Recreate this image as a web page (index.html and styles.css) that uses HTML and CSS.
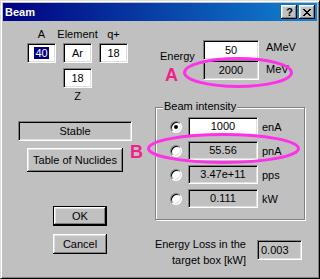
FILE: index.html
```html
<!DOCTYPE html>
<html lang="en">
<head>
  <meta charset="UTF-8">
  <title>Beam</title>
  <link rel="stylesheet" href="styles.css">
</head>
<body>
  <div class="window">
    <div class="titlebar">
      <span class="title-text">Beam</span>
      <div class="title-btn help">?</div>
      <div class="title-btn close">
        <svg width="8" height="7" viewBox="0 0 8 7" shape-rendering="crispEdges">
          <path d="M0 0h2v1H0z M6 0h2v1H6z M1 1h2v1H1z M5 1h2v1H5z M2 2h4v1H2z M3 3h2v1H3z M2 4h4v1H2z M1 5h2v1H1z M5 5h2v1H5z M0 6h2v1H0z M6 6h2v1H6z" fill="#000"/>
        </svg>
      </div>
    </div>

    <div class="client">
      <div class="left">
        <div class="nuclide">
          <div class="cap">A</div>
          <div class="cap">Element</div>
          <div class="cap">q+</div>
          <div class="edit top-row"><span class="sel">40</span></div>
          <div class="edit top-row">Ar</div>
          <div class="edit top-row">18</div>
          <div class="edit z-edit">18</div>
          <div class="cap z-cap">Z</div>
        </div>
        <div class="static stable">Stable</div>
        <button class="btn nuclides">Table of Nuclides</button>
        <button class="btn default ok">OK</button>
        <button class="btn cancel">Cancel</button>
      </div>

      <div class="right">
        <div class="energy">
          <div class="energy-label">Energy</div>
          <div class="energy-fields">
            <div class="edit">50</div>
            <div class="edit readonly">2000</div>
          </div>
          <div class="units">
            <div>AMeV</div>
            <div>MeV</div>
          </div>
        </div>

        <div class="group">
          <div class="group-title">Beam intensity</div>
          <div class="rows">
            <div class="row">
              <span class="radio checked"></span>
              <div class="edit">1000</div>
              <span class="unit">enA</span>
            </div>
            <div class="row">
              <span class="radio"></span>
              <div class="edit readonly">55.56</div>
              <span class="unit">pnA</span>
            </div>
            <div class="row">
              <span class="radio"></span>
              <div class="edit readonly">3.47e+11</div>
              <span class="unit">pps</span>
            </div>
            <div class="row">
              <span class="radio"></span>
              <div class="edit readonly">0.111</div>
              <span class="unit">kW</span>
            </div>
          </div>
        </div>

        <div class="loss">
          <div class="loss-label">Energy Loss in the<br>target box [kW]</div>
          <div class="edit readonly loss-value">0.003</div>
        </div>
      </div>
    </div>

    <svg class="marks" width="320" height="279" viewBox="0 0 320 279">
      <ellipse cx="238" cy="72.5" rx="53.5" ry="14" fill="none" stroke="#ff30e8" stroke-width="3"/>
      <ellipse cx="223.5" cy="148.5" rx="75" ry="14" fill="none" stroke="#ff30e8" stroke-width="3"/>
      <text x="165" y="81" class="mark-letter">A</text>
      <text x="130" y="158" class="mark-letter">B</text>
    </svg>
  </div>
</body>
</html>
```

FILE: styles.css
```css
* {
  box-sizing: border-box;
}

body {
  margin: 0;
  background: #c0c0c0;
  font-family: "Liberation Sans", Arial, sans-serif;
  font-size: 11px;
  color: #000;
}

.window {
  position: relative;
  width: 320px;
  height: 279px;
  background: #c0c0c0;
  border: 1px solid;
  border-color: #dfdfdf #000 #000 #dfdfdf;
  box-shadow: inset 1px 1px #fff, inset -1px -1px #808080;
  padding: 2px;
}

/* title bar */
.titlebar {
  display: flex;
  align-items: center;
  height: 18px;
  padding-left: 2px;
  background: linear-gradient(to right, #000080, #1084d0);
  color: #fff;
  font-weight: bold;
}

.title-text {
  flex: 1;
  line-height: 18px;
}

.title-btn {
  display: flex;
  align-items: center;
  justify-content: center;
  width: 16px;
  height: 14px;
  margin-right: 2px;
  background: #c0c0c0;
  color: #000;
  box-shadow: inset -1px -1px #000, inset 1px 1px #fff, inset -2px -2px #808080, inset 2px 2px #dfdfdf;
  line-height: 14px;
}

.title-btn.help {
  padding-left: 1px;
}

/* client area */
.client {
  display: flex;
  height: 255px;
}

.left {
  width: 149px;
}

.right {
  flex: 1;
}

.nuclide {
  display: grid;
  grid-template-columns: repeat(3, 29px);
  column-gap: 7px;
  margin: 7px 0 0 24px;
}

.cap {
  display: flex;
  justify-content: center;
  line-height: 13px;
  white-space: nowrap;
}

.top-row {
  margin-top: 2px;
}

.z-edit {
  grid-column: 2;
  margin-top: 5px;
}

.z-cap {
  grid-column: 2;
  margin-top: 2px;
}

/* sunken fields */
.edit,
.static {
  height: 20px;
  border: 1px solid;
  border-color: #808080 #fff #fff #808080;
  box-shadow: inset 1px 1px #000, inset -1px -1px #dfdfdf;
  background: #fff;
  text-align: center;
  line-height: 18px;
  white-space: nowrap;
}

.edit.readonly,
.static {
  background: #c0c0c0;
}

.sel {
  background: #000080;
  color: #fff;
  padding: 0 1px;
}

.stable {
  width: 114px;
  margin: 18px 0 0 15px;
}

/* push buttons */
.btn {
  display: block;
  padding: 0;
  border: none;
  background: #c0c0c0;
  font: inherit;
  color: #000;
  box-shadow: inset -1px -1px #000, inset 1px 1px #fff, inset -2px -2px #808080, inset 2px 2px #dfdfdf;
}

.btn.default {
  border: 1px solid #000;
}

.nuclides {
  width: 96px;
  height: 24px;
  margin: 7px 0 0 24px;
}

.ok {
  width: 54px;
  height: 20px;
  margin: 34px 0 0 50px;
}

.cancel {
  width: 54px;
  height: 20px;
  margin: 8px 0 0 50px;
}

/* energy */
.energy {
  display: flex;
  margin: 19px 0 0 8px;
}

.energy-label {
  width: 43px;
  margin-top: 10px;
  line-height: 13px;
}

.energy-fields {
  width: 56px;
}

.units {
  display: flex;
  flex-direction: column;
  gap: 9px;
  margin-left: 7px;
  padding-top: 1px;
  line-height: 13px;
}

/* beam intensity group */
.group {
  width: 150px;
  margin: 27px 0 0 3px;
  padding-bottom: 11px;
  border: 1px solid #808080;
  box-shadow: inset 1px 1px #fff, 1px 1px #fff;
}

.group-title {
  width: fit-content;
  margin: -8px 0 0 7px;
  padding: 0 1px;
  background: #c0c0c0;
  line-height: 13px;
}

.rows {
  display: flex;
  flex-direction: column;
  gap: 5px;
  margin-top: 4px;
}

.row {
  display: flex;
  align-items: center;
  height: 19px;
}

.row .edit {
  width: 70px;
  height: 19px;
  line-height: 17px;
  margin-left: 6px;
}

.unit {
  margin-left: 4px;
}

.radio {
  position: relative;
  width: 12px;
  height: 12px;
  margin-left: 14px;
  border-radius: 50%;
  border: 1px solid;
  border-color: #808080 #fff #fff #808080;
  box-shadow: inset 1px 1px #000, inset -1px -1px #dfdfdf;
  background: #fff;
}

.radio.checked::after {
  content: "";
  position: absolute;
  left: 3px;
  top: 3px;
  width: 4px;
  height: 4px;
  border-radius: 50%;
  background: #000;
}

/* energy loss */
.loss {
  display: flex;
  margin-top: 16px;
}

.loss-label {
  width: 94px;
  text-align: right;
  line-height: 16px;
}

.loss-value {
  width: 45px;
  height: 20px;
  margin: 4px 0 0 11px;
  text-align: left;
  padding-left: 3px;
}

/* pink annotations */
.marks {
  position: absolute;
  left: -1px;
  top: -1px;
  pointer-events: none;
}

.mark-letter {
  font-family: "Liberation Sans", Arial, sans-serif;
  font-size: 18px;
  font-weight: bold;
  fill: #f0208c;
}
```
